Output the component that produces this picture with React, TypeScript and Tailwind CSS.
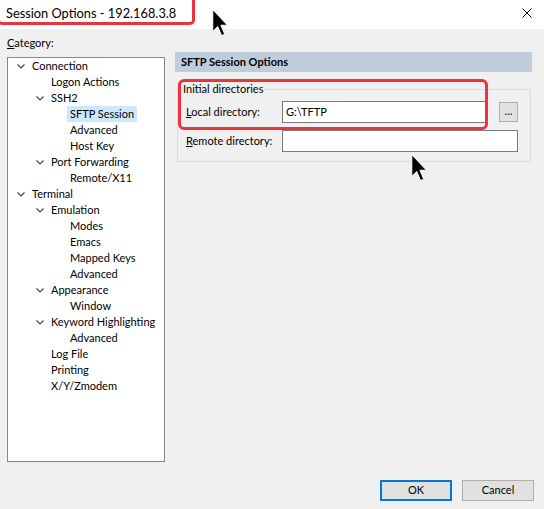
import React from "react";

type Node = { label: string; level: number; open?: boolean; selected?: boolean };

const tree: Node[] = [
  { label: "Connection", level: 0, open: true },
  { label: "Logon Actions", level: 1 },
  { label: "SSH2", level: 1, open: true },
  { label: "SFTP Session", level: 2, selected: true },
  { label: "Advanced", level: 2 },
  { label: "Host Key", level: 2 },
  { label: "Port Forwarding", level: 1, open: true },
  { label: "Remote/X11", level: 2 },
  { label: "Terminal", level: 0, open: true },
  { label: "Emulation", level: 1, open: true },
  { label: "Modes", level: 2 },
  { label: "Emacs", level: 2 },
  { label: "Mapped Keys", level: 2 },
  { label: "Advanced", level: 2 },
  { label: "Appearance", level: 1, open: true },
  { label: "Window", level: 2 },
  { label: "Keyword Highlighting", level: 1, open: true },
  { label: "Advanced", level: 2 },
  { label: "Log File", level: 1 },
  { label: "Printing", level: 1 },
  { label: "X/Y/Zmodem", level: 1 },
];

const indent = ["w-0", "w-[19px]", "w-[38px]"];

const Chevron = () => (
  <svg width="8" height="5" viewBox="0 0 8 5" className="ml-[9px]">
    <polyline points="0.5,0.5 4,4 7.5,0.5" fill="none" stroke="#444" strokeWidth="1.2" />
  </svg>
);

const Cursor = ({ className }: { className: string }) => (
  <svg width="17" height="28" viewBox="0 0 12 20" className={className}>
    <path d="M0.5 0.5 L0.5 16 L4 12.5 L6.8 19 L9 18 L6.3 11.6 L11 11.6 Z" fill="#000" stroke="#fff" strokeWidth="0.7" />
  </svg>
);

const TreeRow: React.FC<{ node: Node }> = ({ node }) => (
  <div className="flex h-[16px] items-center whitespace-nowrap">
    <div className={"shrink-0 " + indent[node.level]} />
    <div className="shrink-0 w-[24px] flex items-center">{node.open && <Chevron />}</div>
    <span className={"-ml-[3px] px-[3px] leading-[16px] " + (node.selected ? "bg-[#cce8ff]" : "")}>
      {node.label}
    </span>
  </div>
);

export default function App() {
  return (
    <div
      className="relative w-[544px] h-[509px] bg-white flex flex-col text-[11px] text-black overflow-hidden whitespace-nowrap"
      style={{ fontFamily: 'Lato, "Liberation Sans", sans-serif' }}
    >
      {/* title bar */}
      <div className="h-[29px] flex items-center justify-between pl-[6px] pr-[12px] bg-white">
        <span className="text-[12.8px] leading-[16px] -mt-[3px]">Session Options - 192.168.3.8</span>
        <svg width="10" height="10" viewBox="0 0 10 10" className="-mt-[3px]">
          <path d="M0.5 0.5 L9.5 9.5 M9.5 0.5 L0.5 9.5" stroke="#000" strokeWidth="1" />
        </svg>
      </div>

      {/* body */}
      <div className="flex-1 bg-[#f0f0f0] flex flex-col">
        <div className="flex-1 flex pl-[7px]">
          {/* left */}
          <div className="w-[158px] flex flex-col">
            <div className="h-[28px] flex items-center">
              <span>
                <span className="underline">C</span>ategory:
              </span>
            </div>
            <div className="h-[405px] bg-white border border-[#828790]">
              {tree.map((n, i) => (
                <TreeRow key={i} node={n} />
              ))}
            </div>
          </div>

          {/* right */}
          <div className="ml-[10px] w-[357px] pt-[23px]">
            <div className="h-[20px] bg-[#bfcddb] flex items-center px-[6px] font-bold">SFTP Session Options</div>
            <fieldset className="mt-[10px] ml-[2px] mr-[1px] border border-[#dcdcdc] pl-[8px] pr-[12px] pt-[5px] pb-[9px]">
              <legend className="-ml-[4px] px-[1px] leading-[14px]">Initial directories</legend>
              <div className="flex items-center h-[22px]">
                <span className="w-[96px] shrink-0">
                  <span className="underline">L</span>ocal directory:
                </span>
                <div className="w-[204px] h-[22px] bg-white border border-[#7a7a7a] flex items-center px-[3px]">G:\TFTP</div>
                <div className="ml-[13px] w-[19px] h-[20px] bg-[#e1e1e1] border border-[#adadad] flex items-center justify-center leading-[10px] pb-[2px]">
                  ...
                </div>
              </div>
              <div className="flex items-center h-[22px] mt-[7px]">
                <span className="w-[96px] shrink-0">
                  <span className="underline">R</span>emote directory:
                </span>
                <div className="w-[236px] h-[22px] bg-white border border-[#7a7a7a]" />
              </div>
            </fieldset>
          </div>
        </div>

        {/* buttons */}
        <div className="h-[21px] mb-[8px] flex justify-end gap-[10px] pr-[10px]">
          <button className="w-[72px] h-[21px] bg-[#e1e1e1] border-2 border-[#0078d7] flex items-center justify-center">OK</button>
          <button className="w-[72px] h-[21px] bg-[#e1e1e1] border border-[#adadad] flex items-center justify-center">Cancel</button>
        </div>
      </div>

      {/* annotations */}
      <div className="absolute left-[-3px] top-[-10px] w-[198px] h-[35px] border-[3px] border-[#e8343a] rounded-[5px]" />
      <div className="absolute left-[178px] top-[79px] w-[310px] h-[51px] border-[3px] border-[#e8343a] rounded-[6px]" />
      <Cursor className="absolute left-[212px] top-[9px]" />
      <Cursor className="absolute left-[411px] top-[154px]" />
    </div>
  );
}
